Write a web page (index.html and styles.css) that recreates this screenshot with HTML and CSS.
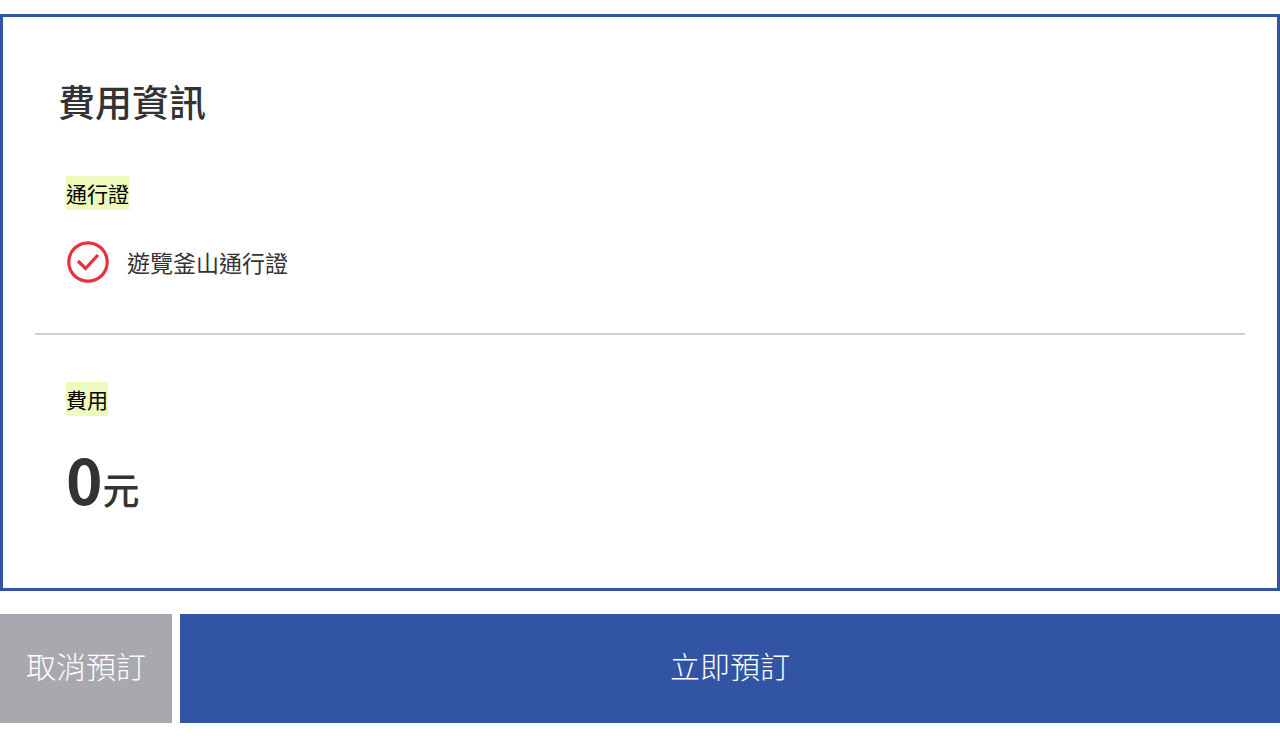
FILE: index.html
```html
<!DOCTYPE html>
<html lang="zh-Hant">
<head>
    <meta charset="UTF-8">
    <meta name="viewport" content="width=device-width, initial-scale=1.0">
    <title>費用資訊</title>
    <link rel="stylesheet" href="styles.css">
</head>
<body>
    <main>
        <section class="fee-box">
            <h1 class="title">費用資訊</h1>
            <div class="pass">
                <h2 class="label"><mark>通行證</mark></h2>
                <div class="pass-item">
                    <svg class="check" viewBox="0 0 42 42" aria-hidden="true">
                        <circle cx="21" cy="21" r="19.2" />
                        <path d="M11 20l7.5 7.5L31 14" />
                    </svg>
                    <span>遊覽釜山通行證</span>
                </div>
            </div>
            <div class="fee">
                <h2 class="label"><mark>費用</mark></h2>
                <p class="price"><strong>0</strong>元</p>
            </div>
        </section>
        <div class="buttons">
            <button type="button" class="btn cancel">取消預訂</button>
            <button type="button" class="btn reserve">立即預訂</button>
        </div>
    </main>
</body>
</html>
```
FILE: styles.css
```css
* {
    box-sizing: border-box;
}
body {
    margin: 0;
    padding: 14px 0 30px;
    font-family: "Noto Sans CJK TC", sans-serif;
    background-color: #fff;
    color: #333;
}
h1, h2, p {
    margin: 0;
}
.fee-box {
    padding: 54px 32px;
    border: 3px solid #3155a4;
}
.title {
    padding-left: 23px;
    font-size: 37px;
    line-height: 60px;
    font-weight: 500;
}
.pass {
    padding: 42px 31px 50px;
    border-bottom: 2px solid #d0d0d0;
}
.label {
    font-size: 21px;
    line-height: 40px;
    font-weight: 400;
}
.label mark {
    display: inline-block;
    line-height: 34px;
    color: #000;
    background-color: #edf9bd;
}
.pass-item {
    display: flex;
    align-items: center;
    gap: 18px;
    margin-top: 28px;
    padding-left: 1px;
    font-size: 23px;
    line-height: 42px;
}
.check {
    width: 42px;
    height: 42px;
    fill: none;
    stroke: #ea303c;
    stroke-width: 3.2;
}
.fee {
    padding: 44px 31px 0;
}
.price {
    margin-top: 14px;
    font-size: 37px;
    line-height: 90px;
    font-weight: 500;
}
.price strong {
    font-size: 62px;
    font-weight: 700;
}
.buttons {
    display: flex;
    gap: 8px;
    margin-top: 23px;
}
.btn {
    padding: 0 26px 6px;
    border: none;
    font-family: inherit;
    font-size: 30px;
    line-height: 103px;
    font-weight: 300;
    color: #fff;
    cursor: pointer;
}
.cancel {
    background-color: #a8a8ae;
}
.reserve {
    flex: 1;
    background-color: #3155a4;
}
```
